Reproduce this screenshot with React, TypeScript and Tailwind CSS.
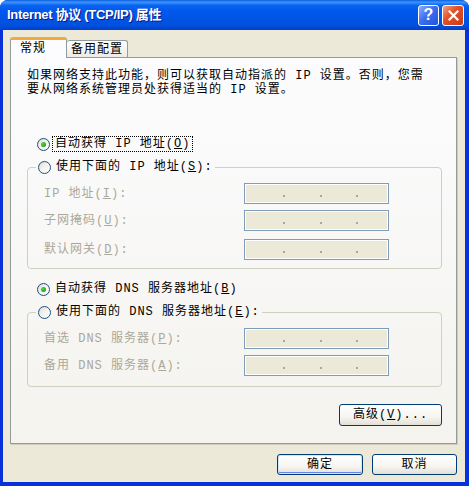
import React from "react";

const cjk = "font-['Liberation_Mono','Noto_Sans_CJK_SC',monospace]";

function Radio({ checked }: { checked?: boolean }) {
  return (
    <span className="flex h-[13px] w-[13px] shrink-0 items-center justify-center rounded-full border border-[#1c5180] bg-[linear-gradient(135deg,#dcd9cf_0%,#f3f2ec_45%,#ffffff_100%)]">
      {checked && (
        <span className="h-[5px] w-[5px] rounded-full bg-[radial-gradient(circle_at_35%_35%,#55d851,#21a121_70%)]" />
      )}
    </span>
  );
}

function IpBox() {
  return (
    <div className="flex h-[21px] w-[145px] items-end border border-[#7f9db9] bg-[#ece9d8] pb-[6px] pl-[38px] shadow-[inset_0_0_0_1px_#ffffff]">
      <span className="h-[2px] w-[2px] bg-[#aca899]" />
      <span className="ml-[35px] h-[2px] w-[2px] bg-[#aca899]" />
      <span className="ml-[34px] h-[2px] w-[2px] bg-[#aca899]" />
    </div>
  );
}

function Field({ label, mt }: { label: React.ReactNode; mt: string }) {
  return (
    <div className={`flex items-center justify-between pl-[16px] pr-[52px] ${mt}`}>
      <span className="text-[#aca899]">{label}</span>
      <IpBox />
    </div>
  );
}

function XpButton({
  children,
  w,
  isDefault,
}: {
  children: React.ReactNode;
  w: string;
  isDefault?: boolean;
}) {
  return (
    <button
      className={`flex h-[21px] ${w} items-center justify-center rounded-[3px] border border-[#003c74] bg-[linear-gradient(to_bottom,#ffffff_0%,#f6f5f0_60%,#e3e0d5_100%)] text-black ${
        isDefault ? "shadow-[inset_0_0_0_1px_#cee7ff,inset_0_-1px_0_1px_#6982ee]" : ""
      }`}
    >
      {children}
    </button>
  );
}

export default function App() {
  return (
    <div
      className={`flex h-[486px] w-[469px] flex-col overflow-hidden rounded-t-[8px] bg-[#0831d9] text-[12px] leading-[12px] tracking-[1px] text-black ${cjk}`}
    >
      {/* title bar */}
      <div className="flex h-[30px] shrink-0 items-center justify-between bg-[linear-gradient(to_bottom,#0a5ddb_0%,#3d95ff_7%,#0a64f0_18%,#0058ee_35%,#0054e3_65%,#0050dd_85%,#003fc8_100%)] pl-[7px] pr-[5px]">
        <span className="font-['Liberation_Sans','Noto_Sans_CJK_SC',sans-serif] text-[13px] font-bold tracking-[-0.3px] text-white [text-shadow:1px_1px_0_#0a1883]">
          Internet 协议 (TCP/IP) 属性
        </span>
        <div className="flex gap-[3px]">
          <div className="flex h-[21px] w-[21px] items-center justify-center rounded-[3px] border border-white bg-[linear-gradient(135deg,#8fb0fb_0%,#3d6ff0_45%,#2453d8_100%)] font-['Liberation_Sans',sans-serif] text-[16px] font-bold tracking-normal text-white">
            ?
          </div>
          <div className="flex h-[21px] w-[22px] items-center justify-center rounded-[3px] border border-white bg-[linear-gradient(135deg,#f2a28a_0%,#e2522b_40%,#c63a12_100%)]">
            <svg width="11" height="11" viewBox="0 0 11 11">
              <path d="M1.5 1.5 L9.5 9.5 M9.5 1.5 L1.5 9.5" stroke="#ffffff" strokeWidth="2.2" strokeLinecap="square" />
            </svg>
          </div>
        </div>
      </div>

      {/* body */}
      <div className="ml-[3px] mr-[4px] mb-[4px] flex flex-1 flex-col bg-[#ece9d8] pl-[7px] pr-[8px] pt-[7px]">
        {/* tabs */}
        <div className="flex items-end">
          <div className="relative z-10 -mb-px h-[21px] w-[57px] rounded-t-[3px] border-x border-[#919b9c] border-t-[3px] border-t-[#f5a938] bg-[#fcfcfe] pl-[9px] pt-[3px]">
            常规
          </div>
          <div className="h-[17px] w-[61px] rounded-t-[3px] border-r border-t border-[#919b9c] bg-[linear-gradient(to_bottom,#ffffff,#ecebe5)] pl-[4px] pt-[3px]">
            备用配置
          </div>
        </div>

        {/* tab page */}
        <div className="flex h-[387px] w-[447px] flex-col border border-[#919b9c] bg-[linear-gradient(to_bottom,#fcfcfe,#f4f3ee)] px-[14px] pl-[16px] shadow-[1px_1px_0_#d0cdbf]">
          <p className="mt-[11px] whitespace-nowrap leading-[14px]">
            如果网络支持此功能，则可以获取自动指派的 IP 设置。否则，您需
            <br />
            要从网络系统管理员处获得适当的 IP 设置。
          </p>

          <div className="mt-[39px] flex h-[16px] items-center pl-[10px]">
            <Radio checked />
            <span className="ml-[2px] border border-dotted border-black px-[2px] py-[1px]">
              自动获得 IP 地址(<u>O</u>)
            </span>
          </div>

          <fieldset className="mt-[7px] rounded-[4px] border border-[#d0d0bf] pb-[8px]">
            <legend className="ml-[8px] flex h-[16px] items-center px-[2px]">
              <Radio />
              <span className="ml-[5px]">
                使用下面的 IP 地址(<u>S</u>):
              </span>
            </legend>
            <Field label={<>IP 地址(<u>I</u>):</>} mt="mt-[8px]" />
            <Field label={<>子网掩码(<u>U</u>):</>} mt="mt-[6px]" />
            <Field label={<>默认网关(<u>D</u>):</>} mt="mt-[8px]" />
          </fieldset>

          <div className="mt-[12px] flex h-[16px] items-center pl-[10px]">
            <Radio checked />
            <span className="ml-[5px]">
              自动获得 DNS 服务器地址(<u>B</u>)
            </span>
          </div>

          <fieldset className="mt-[7px] rounded-[4px] border border-[#d0d0bf] pb-[10px]">
            <legend className="ml-[8px] flex h-[16px] items-center px-[2px]">
              <Radio />
              <span className="ml-[5px]">
                使用下面的 DNS 服务器地址(<u>E</u>):
              </span>
            </legend>
            <Field label={<>首选 DNS 服务器(<u>P</u>):</>} mt="mt-[8px]" />
            <Field label={<>备用 DNS 服务器(<u>A</u>):</>} mt="mt-[6px]" />
          </fieldset>

          <div className="mt-[17px] flex justify-end">
            <XpButton w="w-[103px] h-[22px]">
              高级(<u>V</u>)...
            </XpButton>
          </div>
        </div>

        {/* dialog buttons */}
        <div className="mt-[10px] flex justify-end gap-[9px]">
          <XpButton w="w-[86px]" isDefault>
            确定
          </XpButton>
          <XpButton w="w-[85px]">取消</XpButton>
        </div>
      </div>
    </div>
  );
}
